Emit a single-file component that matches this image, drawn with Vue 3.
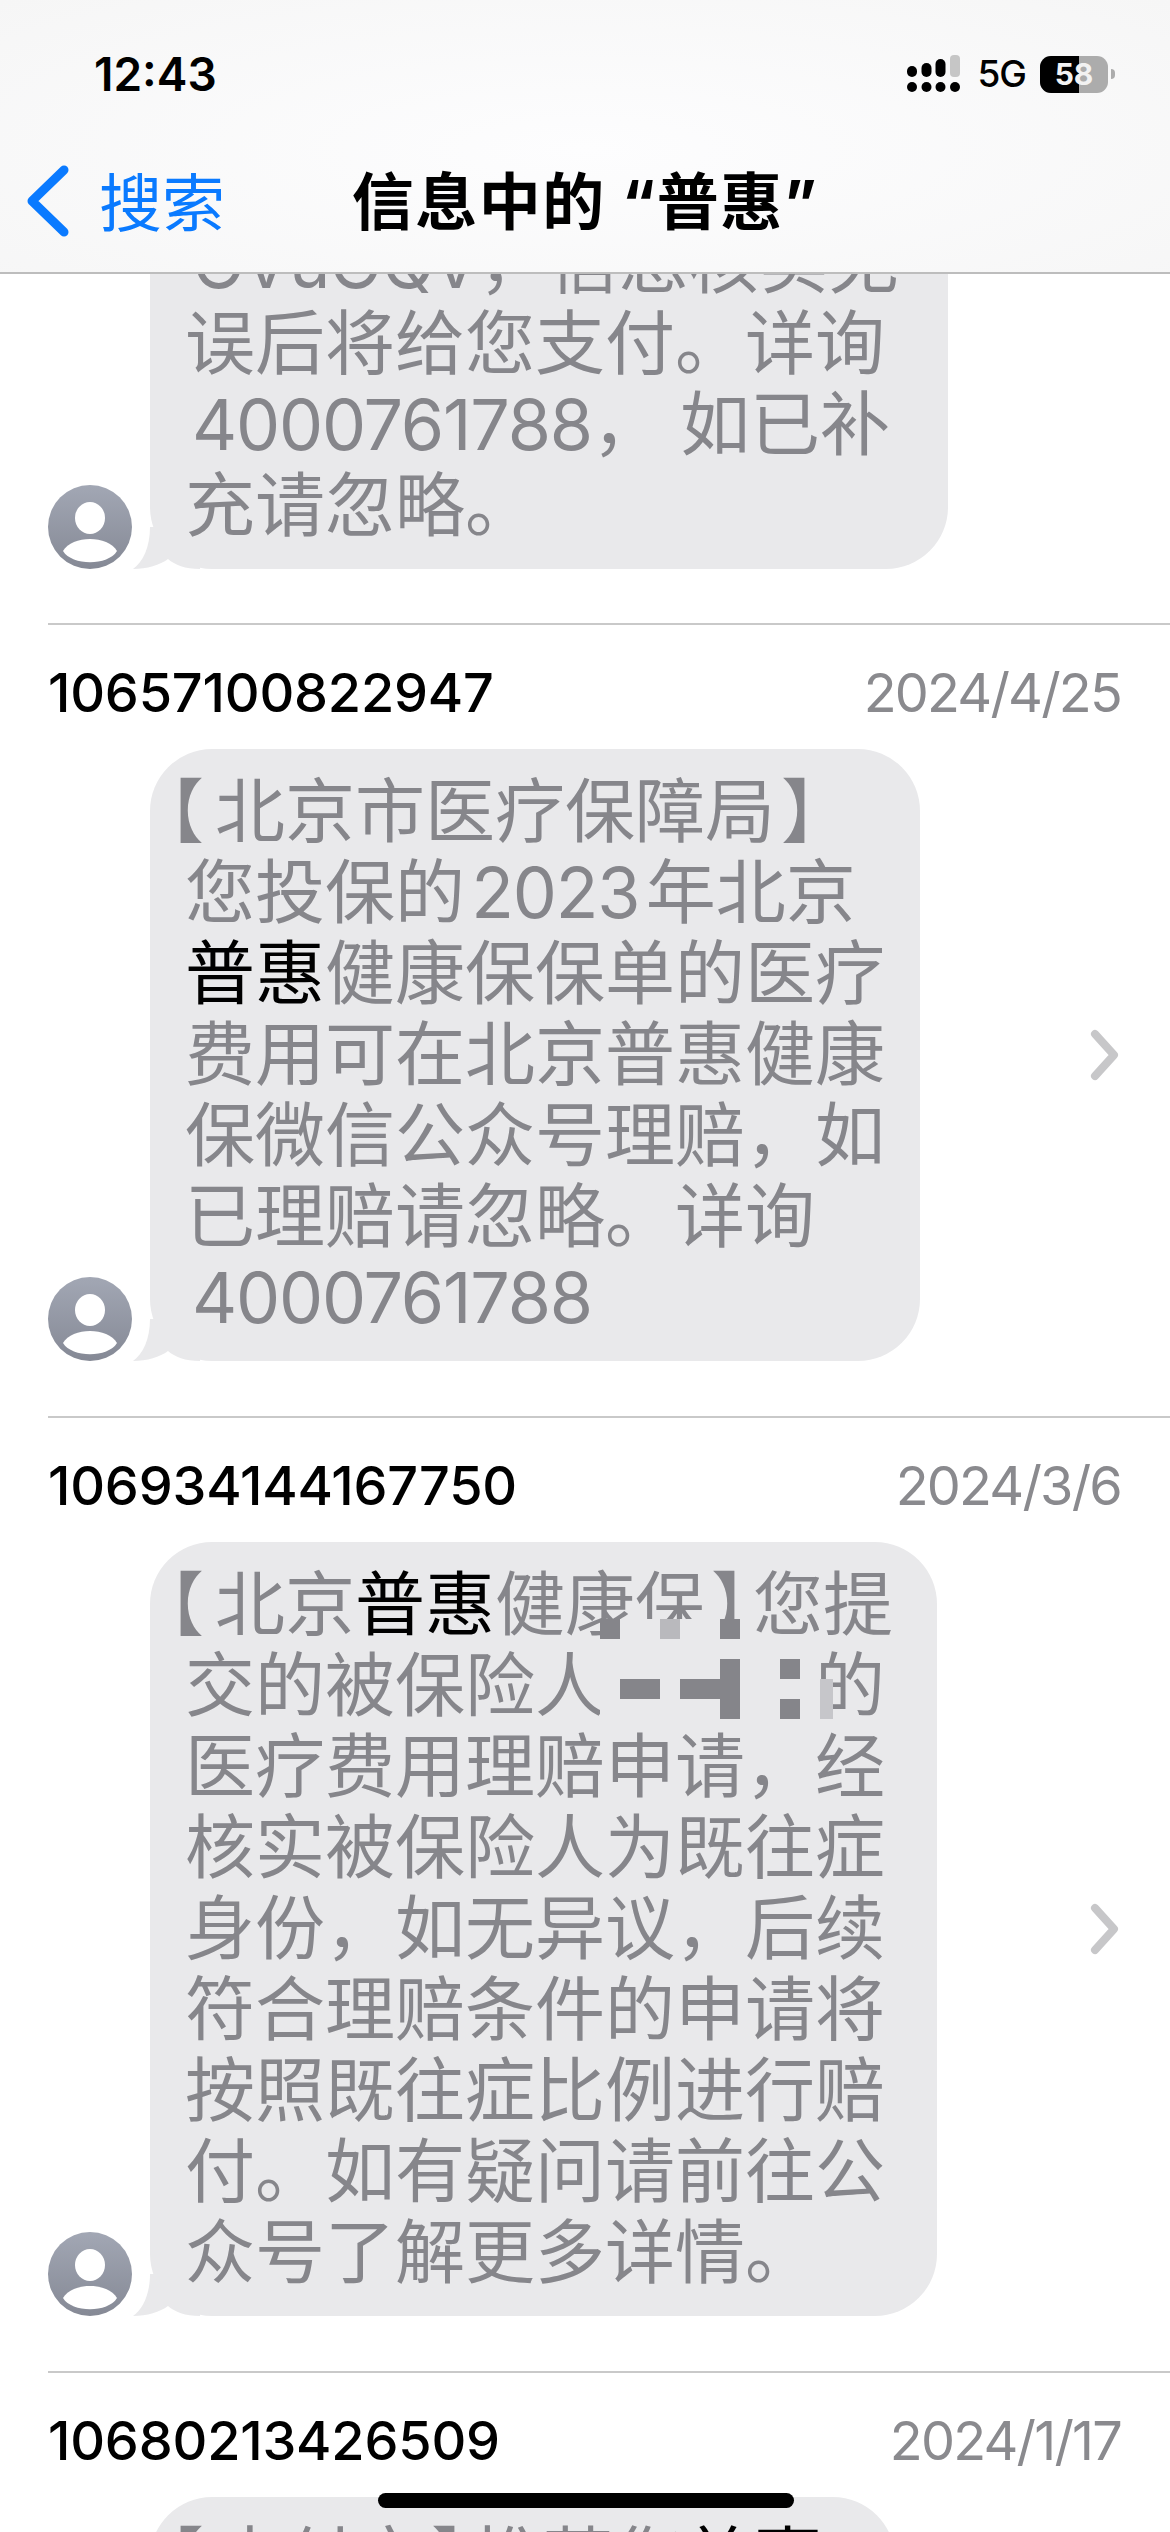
<template>
  <div class="screen">
    <header class="nav">
      <div class="status">
        <span class="clock">12:43</span>
        <div class="status-right">
          <svg class="signal" width="56" height="38" viewBox="0 0 56 38">
            <rect x="0" y="11" width="10" height="11" rx="5" fill="#000" />
            <rect x="14.5" y="8" width="10" height="14" rx="5" fill="#000" />
            <rect x="28.5" y="4" width="10" height="18" rx="5" fill="#000" />
            <rect x="43" y="0" width="10" height="22" rx="4" fill="#c6c6c6" />
            <circle cx="5" cy="32" r="5" fill="#000" />
            <circle cx="19.5" cy="32" r="5" fill="#000" />
            <circle cx="33.5" cy="32" r="5" fill="#000" />
            <circle cx="48" cy="32" r="5" fill="#000" />
          </svg>
          <span class="net">5G</span>
          <div class="battery">
            <div class="battery-body">
              <div class="battery-fill"></div>
              <span class="battery-num">58</span>
            </div>
            <div class="battery-tip"></div>
          </div>
        </div>
      </div>
      <div class="bar">
        <div class="back">
          <svg width="44" height="72" viewBox="0 0 44 72">
            <path d="M38 5 L6 36 L38 67" fill="none" stroke="#0a7aff" stroke-width="9" stroke-linecap="round" stroke-linejoin="round" />
          </svg>
          <span>搜索</span>
        </div>
        <div class="title">信息中的 “普惠”</div>
        <div></div>
      </div>
    </header>

    <main class="list">
      <section v-for="(msg, i) in messages" :key="i" class="result" :class="{ first: !msg.sender }">
        <div v-if="msg.sender" class="head">
          <span class="sender">{{ msg.sender }}</span>
          <span class="date">{{ msg.date }}</span>
        </div>
        <div class="row">
          <div class="avatar-wrap">
            <svg v-if="msg.avatar" class="avatar" width="84" height="84" viewBox="0 0 84 84">
              <defs>
                <linearGradient :id="'av' + i" x1="0" y1="0" x2="0" y2="1">
                  <stop offset="0" stop-color="#a2a7b4" />
                  <stop offset="1" stop-color="#858995" />
                </linearGradient>
              </defs>
              <circle cx="42" cy="42" r="42" :fill="'url(#av' + i + ')'" />
              <ellipse cx="42" cy="33" rx="15" ry="16" fill="#fff" />
              <path d="M15 66 C24 50 60 50 69 66 C60 81 24 81 15 66 Z" fill="#fff" />
            </svg>
          </div>
          <div class="bubble" :class="{ cut: msg.cut }" :style="{ width: msg.width + 'px' }">
            <svg v-if="msg.avatar" class="tail" width="67" height="42" viewBox="0 0 67 42">
              <path d="M17 0 C17 20 10 35 0 42 C14 42 27 38 35 32 C42 38 52 42 67 42 L67 0 Z" fill="#e9e9eb" />
            </svg>
            <div v-for="(line, j) in msg.lines" :key="j" class="line">
              <span v-for="(seg, k) in line" :key="k" :class="seg.c">{{ seg.t }}</span>
            </div>
            <div v-if="msg.mosaic" class="mosaic">
              <template v-for="(rowCells, r) in mosaic" :key="r">
                <i v-for="(cell, c) in rowCells" :key="c" :class="cellClass[cell]"></i>
              </template>
            </div>
          </div>
          <svg v-if="msg.avatar && msg.sender" class="chevron" width="32" height="52" viewBox="0 0 32 52">
            <path d="M6 5 L25 26 L6 47" fill="none" stroke="#c7c7c9" stroke-width="8" stroke-linecap="round" stroke-linejoin="round" />
          </svg>
        </div>
      </section>
    </main>

    <div class="home"></div>
  </div>
</template>

<script setup>
const t = (s, c = '') => ({ t: s, c })
const num = (s) => t(s, 'num start')
const open = (s) => t(s, 'br open')
const close = (s) => t(s, 'br close')
const hit = (s) => t(s, 'hit')

const messages = [
  {
    avatar: true,
    width: 798,
    lines: [
      [], // scrolled away under the nav bar
      [num('OVuOQV'), t('，信息核实无')],
      [t('误后将给您支付。详询')],
      [num('4000761788'), t('，'), t('如已补', 'gap')],
      [t('充请忽略。')],
    ],
  },
  {
    sender: '10657100822947',
    date: '2024/4/25',
    avatar: true,
    width: 770,
    lines: [
      [open('【'), t('北京市医疗保障局'), close('】')],
      [t('您投保的\u200a'), t('2023', 'num'), t('\u200a年北京')],
      [hit('普惠'), t('健康保保单的医疗')],
      [t('费用可在北京普惠健康')],
      [t('保微信公众号理赔，如')],
      [t('已理赔请忽略。详询')],
      [num('4000761788')],
    ],
  },
  {
    sender: '106934144167750',
    date: '2024/3/6',
    avatar: true,
    mosaic: true,
    width: 787,
    lines: [
      [open('【'), t('北京'), hit('普惠'), t('健康保'), close('】'), t('您提')],
      [t('交的被保险人'), t('\u3000\u3000\u3000'), t('的')],
      [t('医疗费用理赔申请，经')],
      [t('核实被保险人为既往症')],
      [t('身份，如无异议，后续')],
      [t('符合理赔条件的申请将')],
      [t('按照既往症比例进行赔')],
      [t('付。如有疑问请前往公')],
      [t('众号了解更多详情。')],
    ],
  },
  {
    sender: '10680213426509',
    date: '2024/1/17',
    cut: true,
    width: 745,
    lines: [[open('【'), t('支付宝'), close('】'), t('推荐您'), hit('普惠')]],
  },
]

// redacted name: b = bubble colour, d = dark, l = light, w = wedge, . = nothing
const mosaic = [
  'dbblbbd.....',
  'bbbbbbbbbbb.',
  'bbbbbbdbbdb.',
  'bddbdddbbbbw',
  'bbbbbbdbbdbw',
]
const cellClass = { b: 'cell-b', d: 'cell-d', l: 'cell-l', w: 'cell-w', '.': '' }
</script>

<style scoped>
.screen {
  width: 1170px;
  height: 2532px;
  overflow: hidden;
  position: relative;
  background: #fff;
  font-family: Inter, "Noto Sans CJK SC", sans-serif;
}
.nav {
  position: relative;
  z-index: 2;
  height: 274px;
  box-sizing: border-box;
  background: radial-gradient(ellipse at 50% 55%, #fdfdfe 0%, #f6f6f6 100%);
  border-bottom: 2px solid #bdbdbd;
}
.status {
  height: 150px;
  box-sizing: border-box;
  padding: 50px 55px 0 94px;
  display: flex;
  justify-content: space-between;
  align-items: flex-start;
}
.clock {
  font-size: 46px;
  line-height: 48px;
  font-weight: 600;
  color: #000;
}
.status-right {
  display: flex;
  align-items: center;
  gap: 14px;
  margin-top: 5px;
}
.net {
  font-size: 37px;
  font-weight: 500;
  color: #000;
  line-height: 38px;
  letter-spacing: -1px;
}
.battery {
  display: flex;
  align-items: center;
  gap: 3px;
}
.battery-body {
  position: relative;
  width: 68px;
  height: 37px;
  border-radius: 11px;
  background: #acacac;
  overflow: hidden;
  text-align: center;
}
.battery-fill {
  position: absolute;
  inset: 0 29px 0 0;
  background: #000;
}
.battery-num {
  position: relative;
  font-size: 30px;
  line-height: 37px;
  font-weight: 700;
  color: #f2f2f2;
}
.battery-tip {
  width: 4px;
  height: 10px;
  border-radius: 0 5px 5px 0;
  background: #acacac;
}
.bar {
  display: grid;
  grid-template-columns: 1fr auto 1fr;
  align-items: center;
  height: 100px;
  margin-top: -2px;
}
.back {
  display: flex;
  align-items: center;
  gap: 29px;
  padding-left: 26px;
  color: #0a7aff;
  font-size: 63px;
  font-family: "Noto Sans CJK SC", sans-serif;
}
.back svg {
  margin-top: 6px;
}
.title {
  font-size: 62px;
  font-weight: 700;
  color: #000;
  letter-spacing: 1.5px;
  font-family: Inter, "Noto Sans CJK SC", sans-serif;
}
.list {
  margin-top: -155px;
}
.result {
  margin-left: 48px;
  border-top: 2px solid #c9c9c9;
  padding-bottom: 55px;
}
.result.first {
  border-top: none;
  padding-bottom: 54px;
}
.head {
  display: flex;
  justify-content: space-between;
  align-items: center;
  height: 70px;
  padding: 32px 49px 22px 0;
  font-size: 54px;
}
.sender {
  color: #000;
  font-weight: 500;
  letter-spacing: -0.2px;
}
.date {
  color: #8a8a8e;
  letter-spacing: -1.8px;
}
.row {
  display: flex;
  align-items: center;
  position: relative;
}
.avatar-wrap {
  width: 102px;
  flex: none;
  align-self: flex-end;
  display: flex;
}
.avatar {
  display: block;
}
.bubble {
  position: relative;
  box-sizing: border-box;
  background: #e9e9eb;
  border-radius: 62px;
  padding: 22px 0 23px 35px;
  color: #86868b;
  font-size: 70px;
  line-height: 81px;
  white-space: nowrap;
}
.bubble.cut {
  min-height: 300px;
}
.line {
  position: relative;
  height: 81px;
}
.tail {
  position: absolute;
  left: -17px;
  bottom: 0;
}
.hit {
  color: #000;
}
.br {
  font-feature-settings: "halt";
}
.br.open {
  margin-left: -16px;
  padding-right: 11px;
}
.br.close {
  padding-left: 6px;
  padding-right: 7px;
}
.num {
  letter-spacing: -1.2px;
}
.num.start {
  margin-left: 7px;
}
.gap {
  margin-left: 18px;
}
.mosaic {
  position: absolute;
  left: 450px;
  top: 77px;
  display: grid;
  grid-template-columns: repeat(11, 20px) 13px;
  grid-auto-rows: 20px;
}
.cell-b {
  background: #e9e9eb;
}
.cell-d {
  background: #85858a;
}
.cell-l {
  background: #b9b9bd;
}
.cell-w {
  background: #c6c6ca;
}
.chevron {
  position: absolute;
  left: 1041px;
  top: 50%;
  margin-top: -26px;
}
.home {
  position: absolute;
  left: 378px;
  top: 2493px;
  width: 416px;
  height: 15px;
  border-radius: 8px;
  background: #000;
  z-index: 3;
}
</style>

<style>
html,
body {
  margin: 0;
  overflow: hidden;
}
</style>
